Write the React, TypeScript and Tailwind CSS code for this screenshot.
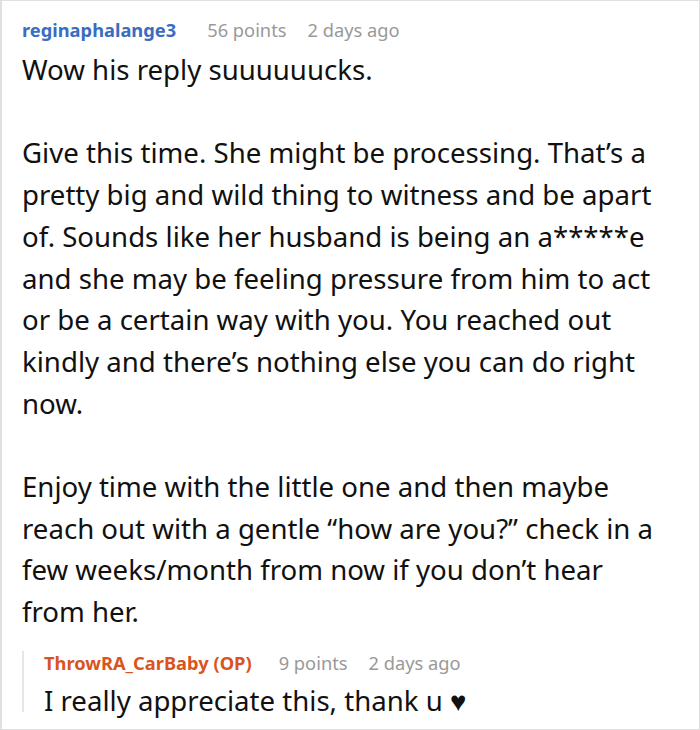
export default function App() {
  const font = { fontFamily: '"Noto Sans", "Open Sans", sans-serif' };
  return (
    <div className="w-[700px] h-[730px] bg-white border border-[#e0e0e0] border-l-2 box-border overflow-hidden" style={font}>
      <div className="pl-[20px] pt-[17px]">
        <div className="flex items-baseline text-[18.3px] leading-[24px] whitespace-nowrap">
          <span className="font-bold text-[#3a6cc0]">reginaphalange3</span>
          <span className="ml-[31px] text-[#999999]">56 points</span>
          <span className="ml-[21px] text-[#999999]">2 days ago</span>
        </div>
        <div className="w-[648px] text-[27.6px] leading-[41.7px] text-[#111111] mt-[7px]">
          <p>Wow his reply suuuuuucks.</p>
          <p className="mt-[41.7px]">
            Give this time. She might be processing. That’s a pretty big and wild thing to witness and be apart of. Sounds like her husband is being an a*****e and she may be feeling pressure from him to act or be a certain way with you. You reached out kindly and there’s nothing else you can do right now.
          </p>
          <p className="mt-[41.7px]">
            Enjoy time with the little one and then maybe reach out with a gentle “how are you?” check in a few weeks/month from now if you don’t hear from her.
          </p>
        </div>
        <div className="mt-[29px] border-l-2 border-[#e6e6e6] pl-[20px]">
          <div className="-mt-[11px] flex items-baseline text-[18.3px] leading-[24px] whitespace-nowrap">
            <span className="font-bold text-[#d9541e]">ThrowRA_CarBaby (OP)</span>
            <span className="ml-[27px] text-[#999999]">9 points</span>
            <span className="ml-[21px] text-[#999999]">2 days ago</span>
          </div>
          <p className="mt-[13px] text-[27.6px] leading-[24px] text-[#111111] whitespace-nowrap">I really appreciate this, thank u ♥</p>
        </div>
      </div>
    </div>
  );
}
